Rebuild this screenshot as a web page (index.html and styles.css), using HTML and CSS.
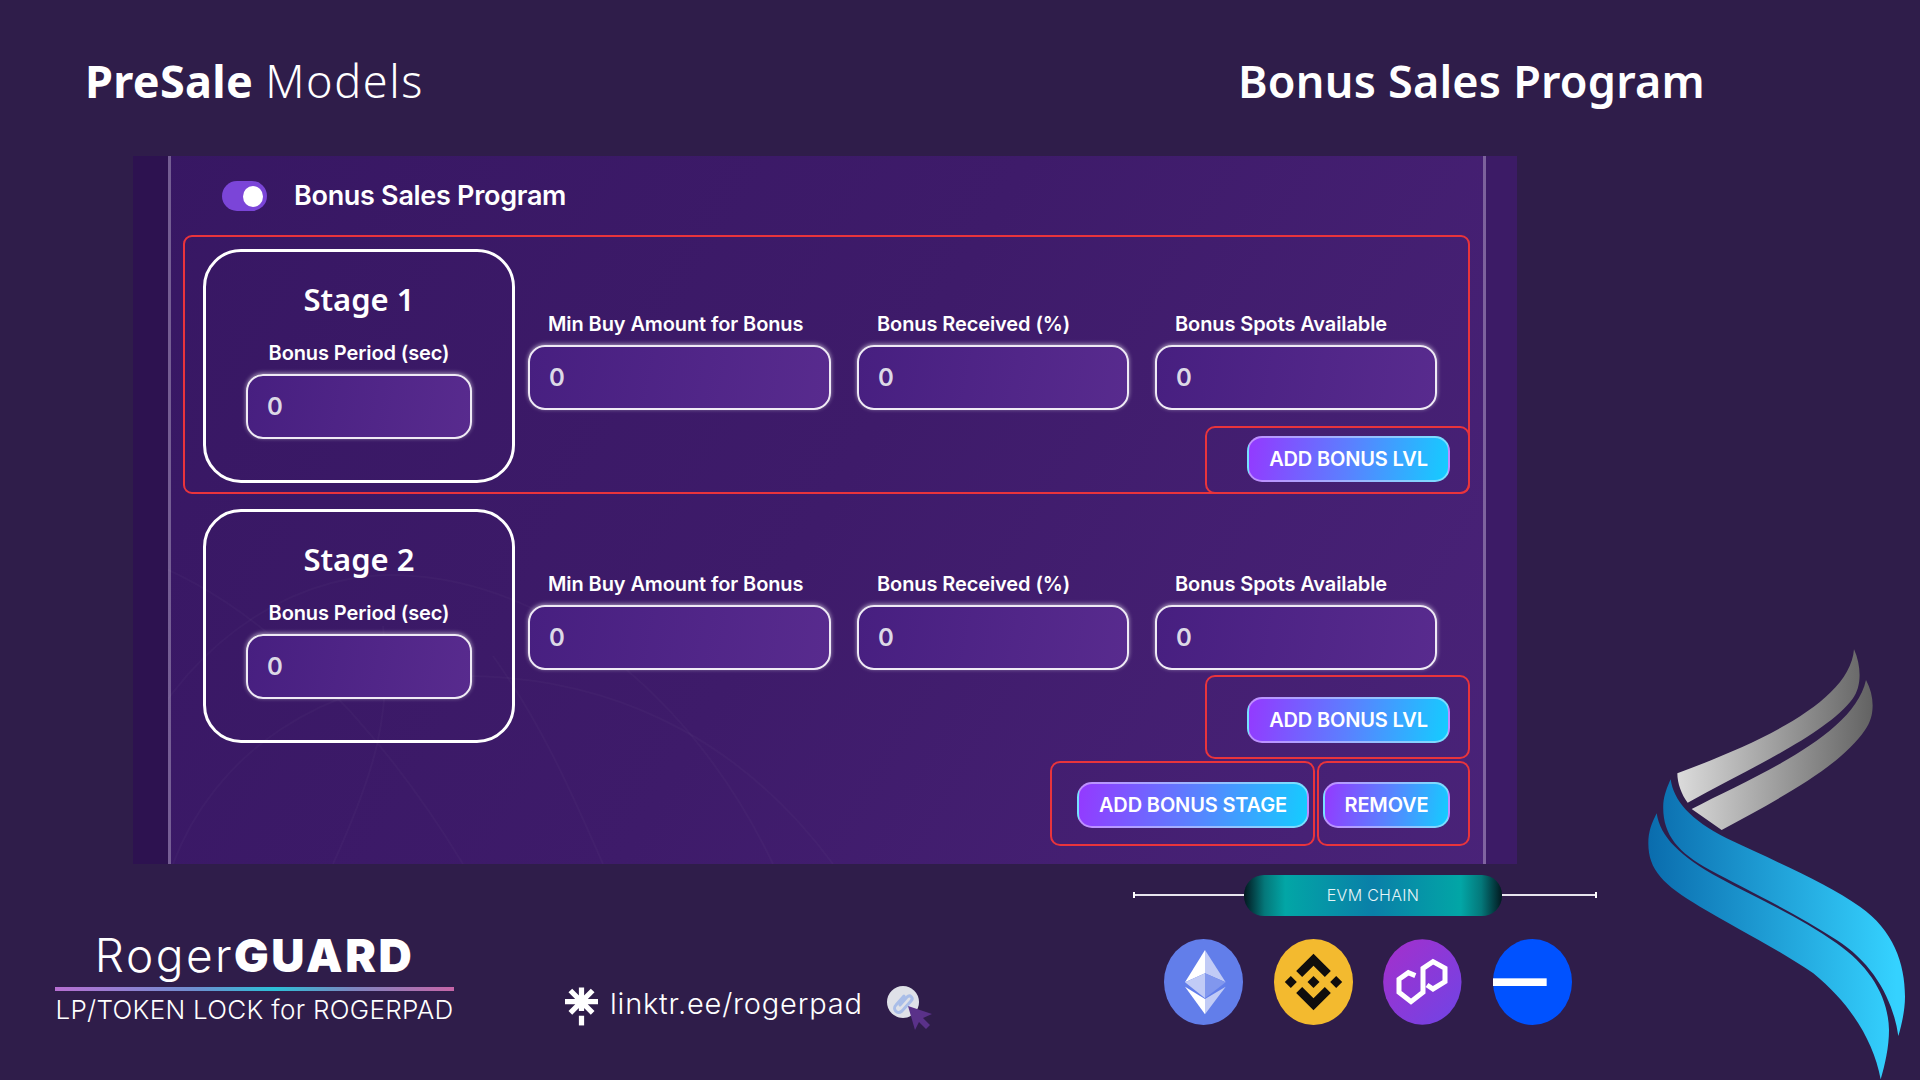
FILE: index.html
```html
<!DOCTYPE html>
<html lang="en">
<head>
<meta charset="utf-8">
<title>Bonus Sales Program</title>
<link rel="stylesheet" href="styles.css">
</head>
<body>
<div class="slide">
  <header class="header">
    <h1 class="title"><b>PreSale</b> <span class="title-light">Models</span></h1>
    <h2 class="title title-right">Bonus Sales Program</h2>
  </header>

  <main class="panel">
    <svg class="panel-decor" viewBox="0 0 1384 708" aria-hidden="true">
      <g fill="none" stroke="#fff" stroke-opacity=".025" stroke-width="2">
        <path d="M0 400C120 440 240 560 330 708"/>
        <path d="M0 600C60 480 170 410 280 420C420 430 560 540 640 708"/>
        <path d="M40 708C80 600 190 520 330 520C500 520 620 600 700 708"/>
        <path d="M200 708C240 620 260 560 250 470"/>
        <path d="M470 708C440 640 410 570 360 500"/>
      </g>
    </svg>
    <div class="strip strip-left"></div>
    <div class="content">
      <div class="toggle-row">
        <span class="toggle"><span class="knob"></span></span>
        <span class="toggle-label">Bonus Sales Program</span>
      </div>

      <section class="stage stage-outlined">
        <div class="stage-card">
          <div class="stage-name">Stage 1</div>
          <div class="field-label">Bonus Period (sec)</div>
          <input class="input input-card" value="0">
        </div>
        <div class="stage-main">
          <div class="fields">
            <div class="field f1"><div class="field-label">Min Buy Amount for Bonus</div><input class="input" value="0"></div>
            <div class="field f2"><div class="field-label">Bonus Received (%)</div><input class="input" value="0"></div>
            <div class="field f3"><div class="field-label">Bonus Spots Available</div><input class="input" value="0"></div>
          </div>
          <div class="action action-lvl action-first"><button class="btn btn-lvl">ADD BONUS LVL</button></div>
        </div>
      </section>

      <section class="stage stage-second">
        <div class="stage-card">
          <div class="stage-name">Stage 2</div>
          <div class="field-label">Bonus Period (sec)</div>
          <input class="input input-card" value="0">
        </div>
        <div class="stage-main">
          <div class="fields">
            <div class="field f1"><div class="field-label">Min Buy Amount for Bonus</div><input class="input" value="0"></div>
            <div class="field f2"><div class="field-label">Bonus Received (%)</div><input class="input" value="0"></div>
            <div class="field f3"><div class="field-label">Bonus Spots Available</div><input class="input" value="0"></div>
          </div>
          <div class="action action-lvl action-next"><button class="btn btn-lvl">ADD BONUS LVL</button></div>
        </div>
      </section>

      <div class="stage-actions">
        <div class="action action-stage"><button class="btn btn-stage">ADD BONUS STAGE</button></div>
        <div class="action action-remove"><button class="btn btn-remove">REMOVE</button></div>
      </div>
    </div>
    <div class="strip strip-right"></div>
  </main>

  <footer class="footer">
    <div class="brand">
      <div class="brand-name"><span class="brand-light">Roger</span><b>GUARD</b></div>
      <div class="brand-rule"></div>
      <div class="brand-sub">LP/TOKEN LOCK for ROGERPAD</div>
    </div>

    <div class="link">
      <svg class="linktree" viewBox="0 0 34 40" aria-hidden="true">
        <g stroke="#fff" stroke-width="5.4" fill="none">
          <path d="M0 14.500H34M17 0V24M5.500 3L28.500 26M28.500 3L5.500 26"/>
          <path d="M17 29V39"/>
        </g>
      </svg>
      <span class="link-text">linktr.ee/rogerpad</span>
      <svg class="link-icon" viewBox="0 0 46 46" aria-hidden="true">
        <circle cx="16" cy="17" r="16" fill="#dfe1e8"/>
        <g fill="none" stroke="#a9bde8" stroke-width="3" stroke-linecap="round">
          <path d="M13 20l7-8c3-3 7 1 4 4l-9 10c-5 4-10-2-6-6l8-9"/>
        </g>
        <path d="M21 21L45 29L36 33L43 40L39 44L32 37L28 45Z" fill="#5a3189"/>
      </svg>
    </div>

    <div class="chain">
      <div class="chain-head">
        <span class="chain-line chain-line-left"></span>
        <span class="chain-pill">EVM CHAIN</span>
        <span class="chain-line chain-line-right"></span>
      </div>
      <div class="chain-icons">
        <svg class="coin" viewBox="0 0 237 258" aria-hidden="true">
          <ellipse cx="118.500" cy="129" rx="118.500" ry="129" fill="#627eea"/>
          <path d="M123 33L63 130L123 103Z" fill="#fff"/>
          <path d="M123 33V103L185 130Z" fill="#c1cbf6"/>
          <path d="M63 130L123 103V178Z" fill="#c1cbf6"/>
          <path d="M123 103L185 130L123 178Z" fill="#8197ee"/>
          <path d="M63 143L123 180V226Z" fill="#fff"/>
          <path d="M185 143L123 180V226Z" fill="#c1cbf6"/>
        </svg>
        <svg class="coin" viewBox="-118.500 -129 237 258" aria-hidden="true">
          <ellipse cx="0" cy="0" rx="118.500" ry="129" fill="#f3ba2f"/>
          <g fill="#0f0d0d">
            <path d="M0-85L52-33L34-15L0-49L-34-15L-52-33Z"/>
            <path d="M0 85L52 33L34 15L0 49L-34 15L-52 33Z"/>
            <path d="M-68-18L-50 0L-68 18L-86 0Z"/>
            <path d="M68-18L86 0L68 18L50 0Z"/>
            <path d="M0-18L18 0L0 18L-18 0Z"/>
          </g>
        </svg>
        <svg class="coin" viewBox="0 0 237 258" aria-hidden="true">
          <defs>
            <linearGradient id="polyGrad" x1="0" y1="0" x2="1" y2="1">
              <stop offset="0" stop-color="#a52fcb"/>
              <stop offset="1" stop-color="#6f44e6"/>
            </linearGradient>
          </defs>
          <ellipse cx="118" cy="129" rx="117.500" ry="128" fill="url(#polyGrad)"/>
          <path d="M97 110L76 101L48 121V160L84 188L120 160V88L150 68L186 88V128L150 150L132 138" fill="none" stroke="#fff" stroke-width="15"/>
        </svg>
        <svg class="coin" viewBox="0 0 237 258" aria-hidden="true">
          <ellipse cx="118.500" cy="129" rx="118.500" ry="129" fill="#0052ff"/>
          <rect x="0" y="118" width="161" height="23" fill="#fff"/>
        </svg>
      </div>
    </div>
  </footer>

  <svg class="logo" viewBox="0 0 900 1380" aria-hidden="true">
    <defs>
      <linearGradient id="greyGrad" gradientUnits="userSpaceOnUse" x1="170" y1="0" x2="760" y2="0">
        <stop offset="0" stop-color="#dcdcdc"/>
        <stop offset="1" stop-color="#626262"/>
      </linearGradient>
      <linearGradient id="blueGrad" gradientUnits="userSpaceOnUse" x1="85" y1="0" x2="830" y2="0">
        <stop offset="0" stop-color="#0a6cad"/>
        <stop offset="1" stop-color="#35d2ff"/>
      </linearGradient>
    </defs>
    <path fill="url(#greyGrad)" d="M172 460C400 375 690 250 702 88C725 140 725 200 698 236C620 340 400 440 203 548C185 525 172 490 172 460Z"/>
    <path fill="url(#greyGrad)" d="M738 180C765 230 765 290 735 330C660 440 480 535 305 630L215 567C400 470 700 350 738 180Z"/>
    <path fill="url(#blueGrad)" d="M152 478C160 540 210 600 320 655C480 730 620 790 720 860C820 930 855 1030 855 1130C855 1170 845 1215 835 1248C820 1140 760 1030 650 960C530 880 380 810 270 750C170 695 125 640 130 550C132 525 142 500 152 478Z"/>
    <path fill="url(#blueGrad)" d="M110 580C120 650 180 710 300 775C410 835 540 890 650 970C750 1040 805 1130 807 1230C807 1280 795 1335 782 1378C760 1260 690 1150 580 1060C470 985 340 920 240 860C130 795 85 750 85 670C85 635 95 610 110 580Z"/>
  </svg>
</div>
</body>
</html>
```

FILE: styles.css
```css
* { box-sizing: border-box; }

html, body { margin: 0; padding: 0; }

body {
  background: #2f1d4a;
  color: #fff;
  font-family: "Inter", "Liberation Sans", sans-serif;
}

.slide {
  position: relative;
  width: 1920px;
  height: 1080px;
  overflow: hidden;
  display: flex;
  flex-direction: column;
}

/* Header */
.header {
  height: 156px;
  padding: 50px 0 0 85px;
  display: grid;
  grid-template-columns: 1153px 1fr;
  align-items: start;
}

.title {
  margin: 0;
  font-family: "Noto Sans", "Open Sans", sans-serif;
  font-size: 45px;
  line-height: 62px;
  font-weight: 300;
  letter-spacing: 0.3px;
}

.title b { font-weight: 700; }

.title-light { letter-spacing: 1.6px; }

.title-right { font-weight: 600; letter-spacing: 0.2px; }

/* Panel */
.panel {
  position: relative;
  margin-left: 133px;
  width: 1384px;
  height: 708px;
  display: flex;
  background: linear-gradient(120deg, #371763 0%, #3e1b6a 50%, #4a2379 100%);
}

.panel-decor {
  position: absolute;
  inset: 0;
  width: 100%;
  height: 100%;
}

.strip { position: relative; flex: none; }

.strip-left { width: 35px; background: #2d1250; }

.strip-right { width: 31px; background: #3c1b66; }

.content {
  position: relative;
  flex: 1;
  border-left: 3px solid rgba(255, 255, 255, 0.3);
  border-right: 3px solid rgba(255, 255, 255, 0.3);
  padding-left: 12px;
}

.toggle-row {
  height: 30px;
  margin: 25px 0 24px;
  padding-left: 39px;
  display: flex;
  align-items: center;
}

.toggle {
  width: 45px;
  height: 30px;
  border-radius: 15px;
  background: #7b45d8;
  display: flex;
  align-items: center;
  justify-content: flex-end;
  padding-right: 4px;
}

.knob {
  width: 20px;
  height: 21px;
  border-radius: 50%;
  background: #fff;
}

.toggle-label {
  margin-left: 27px;
  margin-top: -2px;
  font-size: 27px;
  font-weight: 600;
  letter-spacing: -0.3px;
}

/* Stages */
.stage {
  width: 1287px;
  padding: 12px 0 9px 18px;
  border: 2px solid transparent;
  display: flex;
  gap: 13px;
}

.stage-outlined {
  border-color: #e9343c;
  border-radius: 9px;
}

.stage-second { margin-top: 1px; }

.stage-card {
  flex: none;
  width: 312px;
  height: 234px;
  border: 3px solid #fff;
  border-radius: 38px;
  display: flex;
  flex-direction: column;
  align-items: center;
}

.stage-name {
  margin-top: 26px;
  font-family: "Noto Sans", "Open Sans", sans-serif;
  font-size: 31px;
  line-height: 42px;
  font-weight: 600;
}

.stage-main {
  flex: 1;
  min-width: 0;
  padding-top: 63px;
  display: flex;
  flex-direction: column;
}

.fields { display: flex; gap: 26px; }

.field-label {
  height: 24px;
  margin-bottom: 9px;
  padding-left: 20px;
  font-size: 20px;
  line-height: 24px;
  font-weight: 600;
  letter-spacing: -0.1px;
  white-space: nowrap;
}

.stage-card .field-label {
  margin: 21px 0 9px;
  padding-left: 0;
}

.field.f1 { width: 303px; }
.field.f2 { width: 272px; }
.field.f3 { width: 282px; }

.input {
  display: block;
  width: 100%;
  height: 65px;
  padding: 0 19px;
  border: 2px solid #efeaf5;
  border-radius: 17px;
  background: linear-gradient(100deg, #471f80 0%, #582b8e 100%);
  box-shadow: 0 -1px 4px rgba(255, 255, 255, 0.55);
  color: #dcd9e6;
  font-family: "Inter", "Liberation Sans", sans-serif;
  font-size: 24px;
  font-weight: 600;
  outline: none;
}

.input-card { width: 226px; }

/* Actions */
.action {
  display: flex;
  justify-content: flex-end;
  align-items: flex-start;
  border: 2px solid #e9343c;
  border-radius: 10px;
}

.action-lvl {
  width: 265px;
  margin-left: auto;
  margin-right: -2px;
  padding-right: 18px;
}

.action-first {
  height: 68px;
  margin-top: auto;
  margin-bottom: -11px;
  padding-top: 8px;
}

.action-next {
  height: 84px;
  margin-top: 5px;
  margin-bottom: -17px;
  padding-top: 20px;
}

.stage-actions {
  display: flex;
  justify-content: flex-end;
  gap: 2px;
  width: 1287px;
  margin-top: 7px;
}

.action-stage,
.action-remove {
  height: 85px;
  padding-top: 19px;
}

.action-stage { width: 265px; padding-right: 4px; }

.action-remove { width: 153px; padding-right: 18px; }

.btn {
  height: 46px;
  padding: 0;
  border: 2px solid rgba(255, 255, 255, 0.42);
  border-radius: 15px;
  background: linear-gradient(100deg, #9439ff 0%, #5b80ff 50%, #14cdff 100%);
  color: #fff;
  font-family: "Inter", "Liberation Sans", sans-serif;
  font-size: 20px;
  font-weight: 600;
  letter-spacing: -0.15px;
  white-space: nowrap;
}

.btn-lvl { width: 203px; }
.btn-stage { width: 232px; }
.btn-remove { width: 127px; }

/* Footer */
.footer {
  flex: 1;
  display: flex;
  align-items: flex-start;
}

.brand {
  flex: none;
  width: 399px;
  margin: 65px 0 0 55px;
  display: flex;
  flex-direction: column;
  align-items: center;
}

.brand-name {
  font-family: "Inter", "Liberation Sans", sans-serif;
  font-size: 46px;
  line-height: 52px;
  letter-spacing: 2.5px;
  font-weight: 800;
  white-space: nowrap;
}

.brand-light { font-weight: 300; }

.brand-rule {
  width: 100%;
  height: 4px;
  margin-top: 6px;
  background: linear-gradient(90deg, #b76fd2 0%, #6f8fd0 35%, #2cc0d8 55%, #7f86c0 75%, #c765a8 100%);
}

.brand-sub {
  margin-top: 4px;
  font-family: "Inter", "Liberation Sans", sans-serif;
  font-size: 26px;
  line-height: 30px;
  font-weight: 300;
  letter-spacing: 0.3px;
  white-space: nowrap;
}

.link {
  flex: none;
  width: 366px;
  margin: 121px 0 0 111px;
  display: flex;
  align-items: flex-start;
}

.linktree {
  flex: none;
  width: 33px;
  height: 40px;
  margin-top: 2px;
}

.link-text {
  margin-left: 12px;
  margin-top: 1px;
  font-size: 29px;
  line-height: 36px;
  font-weight: 300;
  letter-spacing: 0.8px;
  white-space: nowrap;
}

.link-icon {
  flex: none;
  width: 46px;
  height: 46px;
  margin-left: 24px;
}

.chain {
  flex: none;
  width: 464px;
  margin: 11px 0 0 202px;
}

.chain-head {
  height: 41px;
  display: flex;
  align-items: center;
}

.chain-line {
  position: relative;
  height: 2px;
  margin-bottom: 2px;
  background: #e8e4ee;
}

.chain-line::before {
  content: "";
  position: absolute;
  top: -2px;
  width: 2px;
  height: 6px;
  background: #fff;
}

.chain-line-left { width: 111px; }

.chain-line-left::before { left: 0; }

.chain-line-right { width: 95px; }

.chain-line-right::before { right: 0; }

.chain-pill {
  width: 258px;
  height: 41px;
  padding-bottom: 2px;
  border-radius: 20px;
  background: linear-gradient(90deg, #02181f 0%, #04787a 8%, #02a6a6 16%, #0a7fa8 50%, #02a6a6 84%, #04787a 92%, #02181f 100%);
  display: flex;
  align-items: center;
  justify-content: center;
  font-size: 16px;
  font-weight: 300;
  letter-spacing: 0.3px;
  color: #e6f5f8;
}

.chain-icons {
  display: flex;
  gap: 30.700px;
  margin: 23px 0 0 31px;
}

.coin {
  flex: none;
  width: 79px;
  height: 86px;
}

/* Free-standing brand mark, overlapping the slide corner */
.logo {
  position: absolute;
  left: 1620px;
  top: 620px;
  width: 300px;
  height: 460px;
}
```
